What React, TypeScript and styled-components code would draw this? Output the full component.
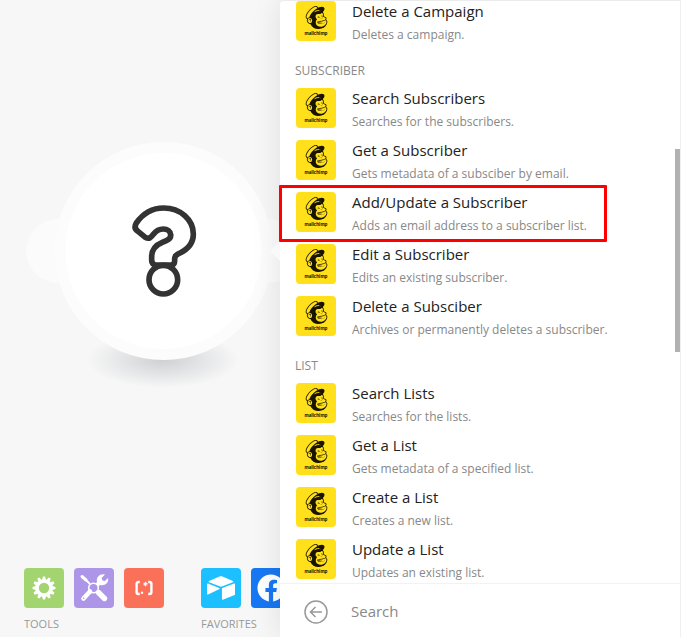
import React from "react";
import styled, { createGlobalStyle } from "styled-components";
import { SiAirtable, SiMailchimp } from "react-icons/si";
import { FaFacebook } from "react-icons/fa";

const GlobalStyle = createGlobalStyle`
  *, *::before, *::after { box-sizing: border-box; }
  body {
    margin: 0;
    background: #f7f7f7;
    font-family: "Open Sans", "Noto Sans", sans-serif;
    color: #222;
  }
  button { font: inherit; color: inherit; border: 0; padding: 0; cursor: pointer; }
`;

const Page = styled.div`
  display: grid;
  grid-template-columns: minmax(0, 1fr) minmax(0, 401px);
  height: 100vh;
  overflow: hidden;
`;

const Canvas = styled.main`
  display: flex;
  flex-direction: column;
  justify-content: space-between;
  min-width: 0;
  overflow: hidden;
  padding-bottom: 4px;
`;

const Scene = styled.svg`
  display: block;
  flex: none;
  width: 330px;
  height: 420px;
`;

const Dock = styled.div`
  display: flex;
  gap: 37px;
  padding-left: 24px;
`;

const DockGroup = styled.section`
  flex: none;
`;

const DockTiles = styled.div`
  display: flex;
  gap: 10px;
`;

const DockTile = styled.button<{ $color: string }>`
  display: flex;
  align-items: center;
  justify-content: center;
  width: 40px;
  height: 40px;
  border-radius: 4px;
  background: ${(p) => p.$color};
  color: #fff;
  svg { display: block; }
`;

const DockLabel = styled.h2`
  margin: 6px 0 0;
  font-size: 11px;
  font-weight: 400;
  line-height: 19px;
  color: #999;
`;

const Panel = styled.aside`
  position: relative;
  z-index: 1;
  display: flex;
  flex-direction: column;
  min-height: 0;
  background: #fff;
  border-top: 1px solid #ececec;
  border-right: 1px solid #efefef;
  border-top-left-radius: 4px;
  box-shadow: 0 0 30px rgba(0, 0, 0, 0.1);
  &::before {
    content: "";
    position: absolute;
    left: -10px;
    top: 240px;
    border: 10px solid transparent;
    border-left: 0;
    border-right-color: #f9f9f9;
  }
`;

const Modules = styled.div`
  flex: 1;
  min-height: 0;
  padding-left: 16px;
`;

const Group = styled.section``;

const GroupTitle = styled.h2`
  margin: 0 0 0 -1px;
  padding: 16px 0 7px;
  font-size: 12px;
  font-weight: 400;
  line-height: 20px;
  color: #888;
`;

const Rows = styled.ul`
  display: grid;
  gap: 8px;
  margin: 0;
  padding: 0;
  list-style: none;
`;

const Row = styled.button<{ $marked?: boolean }>`
  position: relative;
  display: flex;
  gap: 16px;
  width: 100%;
  height: 44px;
  background: none;
  text-align: left;
  white-space: nowrap;
  &::after {
    content: ${(p) => (p.$marked ? '""' : "none")};
    position: absolute;
    left: -17px;
    top: -7px;
    width: 328px;
    height: 57px;
    border: 3px solid #ff0000;
    border-radius: 1px;
  }
`;

const BrandTile = styled.span`
  display: flex;
  flex-direction: column;
  align-items: center;
  flex: none;
  width: 40px;
  height: 40px;
  padding-top: 5px;
  border-radius: 4px;
  background: #ffe01b;
  color: #181400;
  svg { display: block; }
`;

const BrandName = styled.span`
  font: 900 5px/8px Lato, sans-serif;
`;

const RowTitle = styled.span`
  display: block;
  font-size: 15px;
  line-height: 20px;
`;

const RowNote = styled.span`
  display: block;
  font-size: 12px;
  line-height: 28px;
  color: #888;
`;

const ScrollThumb = styled.div`
  position: absolute;
  top: 148px;
  right: 0;
  width: 5px;
  height: 203px;
  background: #b2b2b2;
`;

const SearchBar = styled.form`
  display: flex;
  flex: none;
  align-items: center;
  gap: 23px;
  height: 54px;
  padding: 2px 16px 0 24px;
  border-top: 1px solid #f2f2f2;
`;

const BackButton = styled.button`
  width: 24px;
  height: 24px;
  background: none;
  color: #999;
  svg { display: block; }
`;

const SearchInput = styled.input`
  flex: 1;
  min-width: 0;
  padding: 0 0 2px;
  border: 0;
  outline: 0;
  background: none;
  font: 15px/22px "Open Sans", "Noto Sans", sans-serif;
  color: #222;
  &::placeholder { color: #888; opacity: 1; }
`;

const groups = [
  { title: "", rows: [["Delete a Campaign", "Deletes a campaign."]] },
  {
    title: "SUBSCRIBER",
    rows: [
      ["Search Subscribers", "Searches for the subscribers."],
      ["Get a Subscriber", "Gets metadata of a subsciber by email."],
      ["Add/Update a Subscriber", "Adds an email address to a subscriber list."],
      ["Edit a Subscriber", "Edits an existing subscriber."],
      ["Delete a Subsciber", "Archives or permanently deletes a subscriber."],
    ],
  },
  {
    title: "LIST",
    rows: [
      ["Search Lists", "Searches for the lists."],
      ["Get a List", "Gets metadata of a specified list."],
      ["Create a List", "Creates a new list."],
      ["Update a List", "Updates an existing list."],
    ],
  },
];

function ModuleScene() {
  return (
    <Scene viewBox="0 0 330 420" role="img" aria-label="Empty module">
      <defs>
        <radialGradient id="ground">
          <stop offset="0" stopColor="#cfd0d2" />
          <stop offset="0.5" stopColor="#e3e4e6" />
          <stop offset="1" stopColor="#f7f7f7" />
        </radialGradient>
      </defs>
      <ellipse cx="163" cy="360" rx="76" ry="28" fill="url(#ground)" />
      <circle cx="58" cy="251" r="32" fill="#fbfbfb" />
      <circle cx="269" cy="251" r="32" fill="#fbfbfb" />
      <circle cx="163.500" cy="251" r="109" fill="#fcfcfc" />
      <circle cx="163.500" cy="251" r="98" fill="#fff" />
      <g transform="translate(120 190) scale(.33333)" fill="none" stroke="#333" strokeWidth="17" strokeLinejoin="round">
        <path d="M49 99C68 72 97 54 131 54C181 54 220 89 220 132C220 160 204 179 174 192C167 196 164 199 164 206V212C164 220 160 225 152 225H108C99 225 95 219 95 211V200C95 178 105 166 127 157L139 152C149 148 153 142 152 134C151 123 142 117 130 117C117 117 109 121 101 132C94 141 88 149 76 142L54 124C45 118 43 109 49 99Z" />
        <circle cx="130" cy="269" r="43" />
      </g>
    </Scene>
  );
}

function GearIcon() {
  return (
    <svg width="24" height="24" viewBox="-12 -12 24 24" fill="currentColor">
      {Array.from({ length: 12 }, (_, i) => (
        <path key={i} d="M-1.900 -8L-1.100 -11.500H1.100L1.900 -8Z" transform={`rotate(${i * 30})`} />
      ))}
      <circle r="7" fill="none" stroke="currentColor" strokeWidth="3.600" />
    </svg>
  );
}

function ToolsIcon() {
  return (
    <svg width="30" height="30" viewBox="0 0 30 30" fill="none" stroke="currentColor">
      <path d="M3 3.500L7 7" strokeWidth="3" strokeLinecap="round" />
      <path d="M6 6L11 11" strokeWidth="1.800" />
      <path d="M19.500 19.500L25.500 25.500" strokeWidth="5.400" strokeLinecap="round" />
      <path d="M11 18.500L4.500 25.500" strokeWidth="4.600" strokeLinecap="round" />
      <path d="M18 12L21 9" strokeWidth="4" />
      <path d="M26 1.500L22.500 5L23.500 7.500L26 8L29 5C30 10 26 13 21 12L18 9C17 4 21 0.500 26 1.500Z" fill="currentColor" stroke="none" />
      <circle cx="14.500" cy="15" r="4.800" strokeWidth="1.600" />
      <circle cx="4.700" cy="25.300" r="0.800" fill="#ad96e8" stroke="none" />
    </svg>
  );
}

function PatternIcon() {
  return (
    <svg width="20" height="16" viewBox="0 0 20 16" fill="none" stroke="currentColor">
      <path d="M5.800 2H4.500Q2.600 2 2.600 4V12Q2.600 14 4.500 14H5.800M14.200 2H15.500Q17.400 2 17.400 4V12Q17.400 14 15.500 14H14.200" strokeWidth="2.400" />
      <path d="M11.500 1.800V6.200M9.600 2.900L13.400 5.100M13.400 2.900L9.600 5.100" strokeWidth="1.200" />
      <circle cx="8" cy="12.800" r="1.200" fill="currentColor" stroke="none" />
    </svg>
  );
}

export default function App() {
  return (
    <>
      <GlobalStyle />
      <Page>
        <Canvas>
          <ModuleScene />
          <Dock>
            <DockGroup>
              <DockTiles>
                <DockTile $color="#a2d56f" aria-label="Flow control"><GearIcon /></DockTile>
                <DockTile $color="#ad96e8" aria-label="Tools"><ToolsIcon /></DockTile>
                <DockTile $color="#fb7059" aria-label="Text parser"><PatternIcon /></DockTile>
              </DockTiles>
              <DockLabel>TOOLS</DockLabel>
            </DockGroup>
            <DockGroup>
              <DockTiles>
                <DockTile $color="#1cbfff" aria-label="Airtable"><SiAirtable size={28} /></DockTile>
                <DockTile $color="#1877f2" aria-label="Facebook"><FaFacebook size={28} /></DockTile>
              </DockTiles>
              <DockLabel>FAVORITES</DockLabel>
            </DockGroup>
          </Dock>
        </Canvas>
        <Panel>
          <Modules>
            {groups.map((group) => (
              <Group key={group.title}>
                {group.title && <GroupTitle>{group.title}</GroupTitle>}
                <Rows>
                  {group.rows.map(([title, note]) => (
                    <li key={title}>
                      <Row type="button" $marked={title === "Add/Update a Subscriber"}>
                        <BrandTile>
                          <SiMailchimp size={23} />
                          <BrandName>mailchimp</BrandName>
                        </BrandTile>
                        <span>
                          <RowTitle>{title}</RowTitle>
                          <RowNote>{note}</RowNote>
                        </span>
                      </Row>
                    </li>
                  ))}
                </Rows>
              </Group>
            ))}
          </Modules>
          <ScrollThumb />
          <SearchBar onSubmit={(e) => e.preventDefault()}>
            <BackButton type="button" aria-label="Back">
              <svg width="24" height="24" viewBox="0 0 24 24" fill="none" stroke="currentColor" strokeWidth="1.500">
                <circle cx="12" cy="12" r="11" />
                <path d="M18 12H7M11.500 7L6.500 12L11.500 17" />
              </svg>
            </BackButton>
            <SearchInput type="text" placeholder="Search" aria-label="Search" />
          </SearchBar>
        </Panel>
      </Page>
    </>
  );
}
